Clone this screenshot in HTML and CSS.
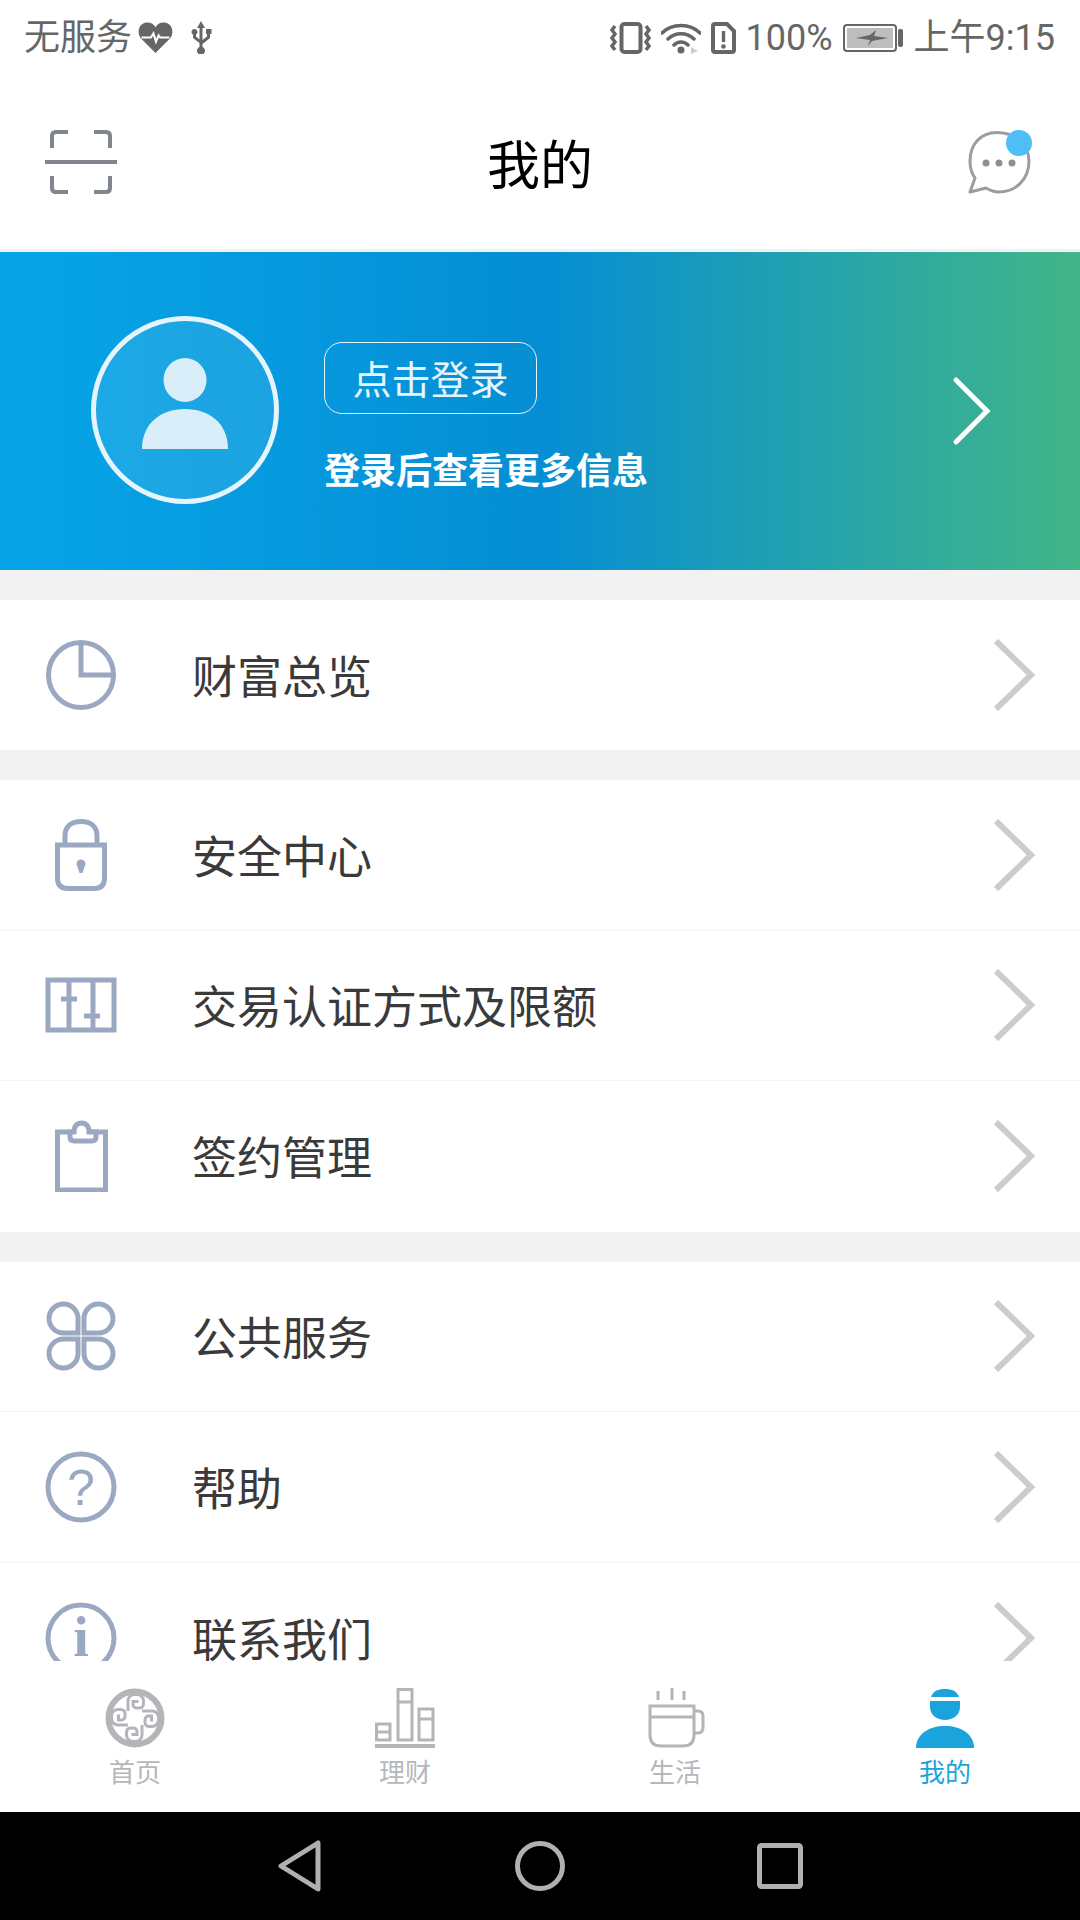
FILE: index.html
```html
<!DOCTYPE html>
<html>
<head>
    <meta charset="UTF-8">
    <meta name="viewport" content="width=device-width, initial-scale=1.0">
    <title>我的</title>
    <link rel="stylesheet" href="styles.css">
</head>
<body>
<div class="page">
    <div class="status-bar">
        <div class="status-group">
            <span class="status-text">无服务</span>
            <svg class="heart-icon" width="35" height="31" viewBox="0 0 33 30"><path class="status-fill" d="M16.5 30 L2.5 16 C-2 11 0 1 8 .5 C12 .3 15 2 16.5 5 C18 2 21 .3 25 .5 C33 1 35 11 30.5 16 Z"/><path class="heart-pulse" d="M3 15 H12 L14.5 11 L17 19 L19.5 13 L21 15 H30"/></svg>
            <svg class="usb-icon" width="22" height="33" viewBox="0 0 22 33"><path class="status-fill" d="M11 0 L15 7 H12.5 V19 L17 15.500 V13 H16 V8 H21.500 V13 H20 V17 L12.500 23 V26 A4 4 0 1 1 9.500 26 V22 L3 17 V13.500 A3 3 0 1 1 6 13.500 V15.500 L9.500 18.500 V7 H7 Z"/></svg>
        </div>
        <div class="status-group status-right">
            <svg width="41" height="32" viewBox="0 0 41 32"><rect class="status-line thick" x="11.500" y="2" width="19" height="28" rx="3"/><path class="status-wave" d="M5 4 L2 8 L5 12 L2 16 L5 20 L2 24 L5 28 M36 4 L39 8 L36 12 L39 16 L36 20 L39 24 L36 28"/></svg>
            <svg width="40" height="32" viewBox="0 0 40 32"><path class="status-line wifi-arc" d="M1 11 C11 1 29 1 39 11 M7 17 C14 10 26 10 33 17 M13 23 C17 19 23 19 27 23"/><circle class="status-fill" cx="20" cy="28" r="3.500"/><path class="wifi-small" d="M30 25 L37 29 L30 32 Z"/></svg>
            <svg width="25" height="32" viewBox="0 0 25 32"><path class="status-line thick" d="M4 2 H16 L23 9 V28 Q23 30 21 30 H4 Q2 30 2 28 V4 Q2 2 4 2 Z"/><rect class="status-fill" x="10.800" y="9" width="3.400" height="11"/><circle class="status-fill" cx="12.500" cy="24.500" r="2.300"/></svg>
            <span class="status-text">100%</span>
            <svg width="61" height="28" viewBox="0 0 61 28"><rect class="status-line thin" x="1" y="1" width="52" height="26" rx="3"/><rect class="battery-level" x="4" y="4" width="46" height="20"/><path class="status-fill" d="M13 14 L27 11 L33 6 L31 12 L45 14 L29 17 L25 22 L27 16 Z"/><rect class="status-fill" x="55" y="5" width="5" height="18" rx="2"/></svg>
            <span class="status-text">上午9:15</span>
        </div>
    </div>

    <header class="top-bar">
        <svg class="top-icon" width="72" height="64" viewBox="0 0 72 64"><path class="scan-line" d="M7 18 V6 Q7 2 11 2 H23 M49 2 H61 Q65 2 65 6 V18 M7 46 V58 Q7 62 11 62 H23 M49 62 H61 Q65 62 65 58 V46"/><path class="scan-bar" d="M0 32 H72"/></svg>
        <h1 class="page-title">我的</h1>
        <svg class="top-icon" width="72" height="64" viewBox="0 0 72 64"><path class="msg-bubble" d="M34 2.500 C17 2.500 7 15 7 31 C7 38 9 44 12 48 L7 62 L23 58 C28 61 32 62 36 62 C52 62 66 50 66 31 C66 15 52 2.500 34 2.500 Z"/><circle class="msg-dot" cx="23" cy="33" r="3.500"/><circle class="msg-dot" cx="36" cy="33" r="3.500"/><circle class="msg-dot" cx="49" cy="33" r="3.500"/><circle class="msg-badge" cx="56" cy="13" r="13"/></svg>
    </header>

    <section class="banner">
        <div class="avatar">
            <svg width="86" height="92" viewBox="0 0 86 92"><ellipse class="avatar-fill" cx="43" cy="22" rx="21.500" ry="22"/><path class="avatar-fill" d="M0 91 C0 66 18 51 43 51 C68 51 86 66 86 91 Z"/></svg>
        </div>
        <div class="banner-text">
            <div class="login-button">点击登录</div>
            <div class="login-tip">登录后查看更多信息</div>
        </div>
        <svg class="banner-arrow" width="40" height="70" viewBox="0 0 40 70"><path d="M4 4 L35 35 L4 66"/></svg>
    </section>

    <main class="content">
        <div class="group">
            <div class="row row-first">
                <svg class="row-icon" width="72" height="72" viewBox="0 0 72 72"><circle cx="36" cy="36" r="32.500"/><path d="M36 4 V36 H68"/></svg>
                <span class="row-label">财富总览</span>
                <svg class="row-arrow" width="44" height="72" viewBox="0 0 44 72"><path d="M4 2 L39 36 L4 70"/></svg>
            </div>
        </div>
        <div class="group">
            <div class="row">
                <svg class="row-icon" width="72" height="72" viewBox="0 0 72 72"><path d="M20 26 V17 C20 7 27 2.500 36 2.500 C45 2.500 52 7 52 17 V26"/><path d="M12.500 26 H59.500 V59 Q59.500 69.500 49 69.500 H23 Q12.500 69.500 12.500 59 Z"/><path class="row-icon-solid" d="M31.500 45 A4.500 4.500 0 1 1 40.500 45 L37.500 54 H34.500 Z"/></svg>
                <span class="row-label">安全中心</span>
                <svg class="row-arrow" width="44" height="72" viewBox="0 0 44 72"><path d="M4 2 L39 36 L4 70"/></svg>
            </div>
            <div class="row">
                <svg class="row-icon" width="72" height="72" viewBox="0 0 72 72"><rect x="3" y="11" width="66" height="50"/><path d="M24 11 V61 M48 11 V61 M16 30 H32 M39 47 H55"/></svg>
                <span class="row-label">交易认证方式及限额</span>
                <svg class="row-arrow" width="44" height="72" viewBox="0 0 44 72"><path d="M4 2 L39 36 L4 70"/></svg>
            </div>
            <div class="row">
                <svg class="row-icon" width="72" height="72" viewBox="0 0 72 72"><rect x="12.500" y="12" width="48" height="58"/><path class="clip-pill" d="M25 12 V17 Q25 21 29 21 H47 Q51 21 51 17 V12 H44 C44 6 41 3 36.500 3 C32 3 29 6 29 12 Z"/></svg>
                <span class="row-label">签约管理</span>
                <svg class="row-arrow" width="44" height="72" viewBox="0 0 44 72"><path d="M4 2 L39 36 L4 70"/></svg>
            </div>
        </div>
        <div class="group">
            <div class="row">
                <svg class="row-icon" width="72" height="72" viewBox="0 0 72 72"><path d="M33 33 H19 A14.500 14.500 0 1 1 33 19 Z"/><path d="M39 33 H53 A14.500 14.500 0 1 0 39 19 Z"/><path d="M33 39 H19 A14.500 14.500 0 1 0 33 53 Z"/><path d="M39 39 H53 A14.500 14.500 0 1 1 39 53 Z"/></svg>
                <span class="row-label">公共服务</span>
                <svg class="row-arrow" width="44" height="72" viewBox="0 0 44 72"><path d="M4 2 L39 36 L4 70"/></svg>
            </div>
            <div class="row">
                <svg class="row-icon" width="72" height="72" viewBox="0 0 72 72"><circle cx="36" cy="36" r="33"/><text class="icon-glyph" x="36" y="54" text-anchor="middle">?</text></svg>
                <span class="row-label">帮助</span>
                <svg class="row-arrow" width="44" height="72" viewBox="0 0 44 72"><path d="M4 2 L39 36 L4 70"/></svg>
            </div>
            <div class="row">
                <svg class="row-icon" width="72" height="72" viewBox="0 0 72 72"><circle cx="36" cy="36" r="33"/><text class="icon-glyph icon-glyph-serif" x="36" y="54" text-anchor="middle">i</text></svg>
                <span class="row-label">联系我们</span>
                <svg class="row-arrow" width="44" height="72" viewBox="0 0 44 72"><path d="M4 2 L39 36 L4 70"/></svg>
            </div>
        </div>
    </main>

    <nav class="tab-bar">
        <div class="tab">
            <svg class="tab-icon" width="60" height="60" viewBox="0 0 60 60">
                <circle class="tab-ring" cx="30" cy="30" r="26.500"/>
                <path class="tab-swirl" d="M23 23 V13 A6.500 6.500 0 0 1 29.500 6.500 H32 A6.500 6.500 0 0 1 38.500 13 V16 A4 4 0 0 1 34.500 20 H31.500 A3.500 3.500 0 0 1 28 16.500 V13.500 H33.500"/>
                <path class="tab-swirl" transform="rotate(180 30 30)" d="M23 23 V13 A6.500 6.500 0 0 1 29.500 6.500 H32 A6.500 6.500 0 0 1 38.500 13 V16 A4 4 0 0 1 34.500 20 H31.500 A3.500 3.500 0 0 1 28 16.500 V13.500 H33.500"/>
                <path class="tab-swirl" transform="rotate(-90 30 30)" d="M23 23 V13 A6.500 6.500 0 0 1 29.500 6.500 H32 A6.500 6.500 0 0 1 38.500 13 V16 A4 4 0 0 1 34.500 20 H31.500 A3.500 3.500 0 0 1 28 16.500 V13.500 H33.500"/>
                <path class="tab-swirl" transform="rotate(90 30 30)" d="M23 23 V13 A6.500 6.500 0 0 1 29.500 6.500 H32 A6.500 6.500 0 0 1 38.500 13 V16 A4 4 0 0 1 34.500 20 H31.500 A3.500 3.500 0 0 1 28 16.500 V13.500 H33.500"/>
            </svg>
            <span class="tab-label">首页</span>
        </div>
        <div class="tab">
            <svg class="tab-icon" width="60" height="60" viewBox="0 0 60 60">
                <path class="tab-line" d="M1.500 36 H15 V52 H1.500 Z M1.500 44 H15 M23 1.500 H37 V52 H23 Z M23 14 H37 M44 21 H58 V52 H44 Z M44 31 H58"/>
                <path class="tab-line tab-base" d="M0 58 H60"/>
            </svg>
            <span class="tab-label">理财</span>
        </div>
        <div class="tab">
            <svg class="tab-icon" width="60" height="60" viewBox="0 0 60 60">
                <path class="tab-line" d="M13 3 V12 M27 0 V12 M39 3 V12"/>
                <path class="tab-line" d="M5 18 H49 V47 Q49 58 38 58 H16 Q5 58 5 47 Z M5 29 H49 M49 23 H53 Q58 23 58 28 V39 Q58 45 53 45 H49"/>
            </svg>
            <span class="tab-label">生活</span>
        </div>
        <div class="tab tab-active">
            <svg class="tab-icon" width="60" height="60" viewBox="0 0 60 60">
                <path class="tab-solid" d="M16 9 C18 3 23 1 30 1 C37 1 42 3 44 9 Z"/>
                <path class="tab-solid" d="M15 13 H45 V19 C45 27 38 32 30 32 C22 32 15 27 15 19 Z"/>
                <path class="tab-solid" d="M1 60 C1 46 14 38 30 38 C46 38 59 46 59 60 Z"/>
            </svg>
            <span class="tab-label">我的</span>
        </div>
    </nav>

    <div class="nav-bar">
        <svg width="46" height="52" viewBox="0 0 46 52"><path class="nav-shape" d="M41 3 V49 L4 26 Z"/></svg>
        <svg width="50" height="50" viewBox="0 0 50 50"><circle class="nav-shape" cx="25" cy="25" r="22.500"/></svg>
        <svg width="46" height="46" viewBox="0 0 46 46"><rect class="nav-shape" x="2.500" y="2.500" width="41" height="41" rx="2"/></svg>
    </div>
</div>
</body>
</html>
```

FILE: styles.css
```css
* {
    box-sizing: border-box;
}
body {
    margin: 0;
    font-family: "Noto Sans CJK SC", "Noto Sans", sans-serif;
    background: #fff;
}
svg {
    display: block;
    flex-shrink: 0;
}
.page {
    width: 1080px;
    height: 1920px;
    display: flex;
    flex-direction: column;
    overflow: hidden;
}

/* status bar */
.status-bar {
    height: 75px;
    padding: 0 25px 0 24px;
    display: flex;
    justify-content: space-between;
    align-items: center;
}
.status-group {
    display: flex;
    align-items: center;
}
.status-right {
    gap: 10px;
}
.status-text {
    font-family: Roboto, "Noto Sans CJK SC", sans-serif;
    font-size: 36px;
    line-height: 40px;
    color: #666;
}
.heart-icon {
    margin-left: 6px;
}
.usb-icon {
    margin-left: 17px;
}
.status-fill {
    fill: #666;
}
.status-line {
    fill: none;
    stroke: #666;
    stroke-width: 3;
}
.status-line.thin {
    stroke-width: 2;
}
.status-line.thick {
    stroke-width: 4;
}
.status-wave {
    fill: none;
    stroke: #666;
    stroke-width: 3.500;
}
.wifi-arc {
    stroke-width: 3.500;
    stroke-linecap: round;
}
.wifi-small {
    fill: #ccc;
}
.heart-pulse {
    fill: none;
    stroke: #fff;
    stroke-width: 2;
}
.battery-level {
    fill: #bdbdbd;
}

/* title bar */
.top-bar {
    height: 174px;
    padding: 0 45px;
    display: flex;
    justify-content: space-between;
    align-items: center;
}
.page-title {
    margin: 0;
    font-size: 53px;
    font-weight: 400;
    color: #000;
}
.scan-line {
    fill: none;
    stroke: #80858f;
    stroke-width: 4;
}
.scan-bar {
    fill: none;
    stroke: #80858f;
    stroke-width: 4;
}
.msg-bubble {
    fill: none;
    stroke: #9a9da3;
    stroke-width: 3;
    stroke-linejoin: round;
}
.msg-dot {
    fill: #8a8e96;
}
.msg-badge {
    fill: #4fbdf8;
}

/* login banner */
.banner {
    height: 321px;
    border-top: 3px solid #eef2f2;
    padding: 0 88px 0 91px;
    display: flex;
    align-items: center;
    background: linear-gradient(90deg, #07a5e8 0%, #058ed4 50%, #25a3ac 76%, #42b688 100%);
}
.avatar {
    width: 188px;
    height: 188px;
    margin-bottom: 2px;
    padding-bottom: 13px;
    border: 5px solid #e6f5fb;
    border-radius: 50%;
    background: rgba(255, 255, 255, 0.09);
    display: flex;
    justify-content: center;
    align-items: center;
}
.avatar-fill {
    fill: #d9eef8;
}
.banner-text {
    margin-left: 45px;
    padding-top: 14px;
    display: flex;
    flex-direction: column;
    align-items: flex-start;
}
.login-button {
    width: 213px;
    height: 72px;
    border: 1px solid #e6f5fb;
    border-radius: 18px;
    color: #e6f5fb;
    font-size: 39px;
    line-height: 68px;
    text-align: center;
}
.login-tip {
    margin-top: 28px;
    color: #fff;
    font-size: 36px;
    line-height: 52px;
    font-weight: 700;
}
.banner-arrow {
    margin-left: auto;
}
.banner-arrow path {
    fill: none;
    stroke: #fff;
    stroke-width: 5;
    stroke-linecap: round;
}

/* menu list */
.content {
    flex: 1;
    min-height: 0;
    overflow: hidden;
    background: #f2f2f2;
    padding-top: 30px;
}
.group {
    margin-bottom: 30px;
    background: #fff;
}
.row {
    height: 150.500px;
    padding: 0 45px;
    display: flex;
    align-items: center;
    border-bottom: 1px solid #f5f5f5;
}
.row:last-child {
    border-bottom: none;
}
.row-first {
    height: 150px;
}
.row-icon {
    fill: none;
    stroke: #9ba8c2;
    stroke-width: 5;
}
.row-icon-solid {
    fill: #9ba8c2;
    stroke: none;
}
.clip-pill {
    fill: #fff;
}
.icon-glyph {
    fill: #9ba8c2;
    stroke: none;
    font-family: "Liberation Sans", sans-serif;
    font-size: 50px;
}
.icon-glyph-serif {
    font-family: "Liberation Serif", serif;
    font-size: 56px;
    font-weight: 700;
}
.row-label {
    margin-left: 75px;
    font-size: 45px;
    line-height: 60px;
    color: #3a3a3a;
}
.row-arrow {
    margin-left: auto;
    margin-right: -1px;
}
.row-arrow path {
    fill: none;
    stroke: #ccc;
    stroke-width: 6;
}

/* bottom tabs */
.tab-bar {
    height: 151px;
    padding-top: 27px;
    display: flex;
    background: #fff;
}
.tab {
    flex: 1;
    display: flex;
    flex-direction: column;
    align-items: center;
}
.tab-label {
    margin-top: 8px;
    font-size: 26px;
    line-height: 30px;
    color: #b5b7bb;
}
.tab-active .tab-label {
    color: #1ba3dc;
}
.tab-ring {
    fill: #fff;
    stroke: #b3b5b9;
    stroke-width: 6;
}
.tab-swirl {
    fill: none;
    stroke: #b3b5b9;
    stroke-width: 3;
}
.tab-line {
    fill: none;
    stroke: #b3b5b9;
    stroke-width: 3;
}
.tab-base {
    stroke-width: 4;
}
.tab-solid {
    fill: #1ba3dc;
}

/* android nav */
.nav-bar {
    height: 108px;
    background: #000;
    display: grid;
    grid-template-columns: repeat(3, 240px);
    justify-content: center;
    justify-items: center;
    align-items: center;
}
.nav-shape {
    fill: none;
    stroke: #b0b0b0;
    stroke-width: 5;
    stroke-linejoin: round;
}
```
